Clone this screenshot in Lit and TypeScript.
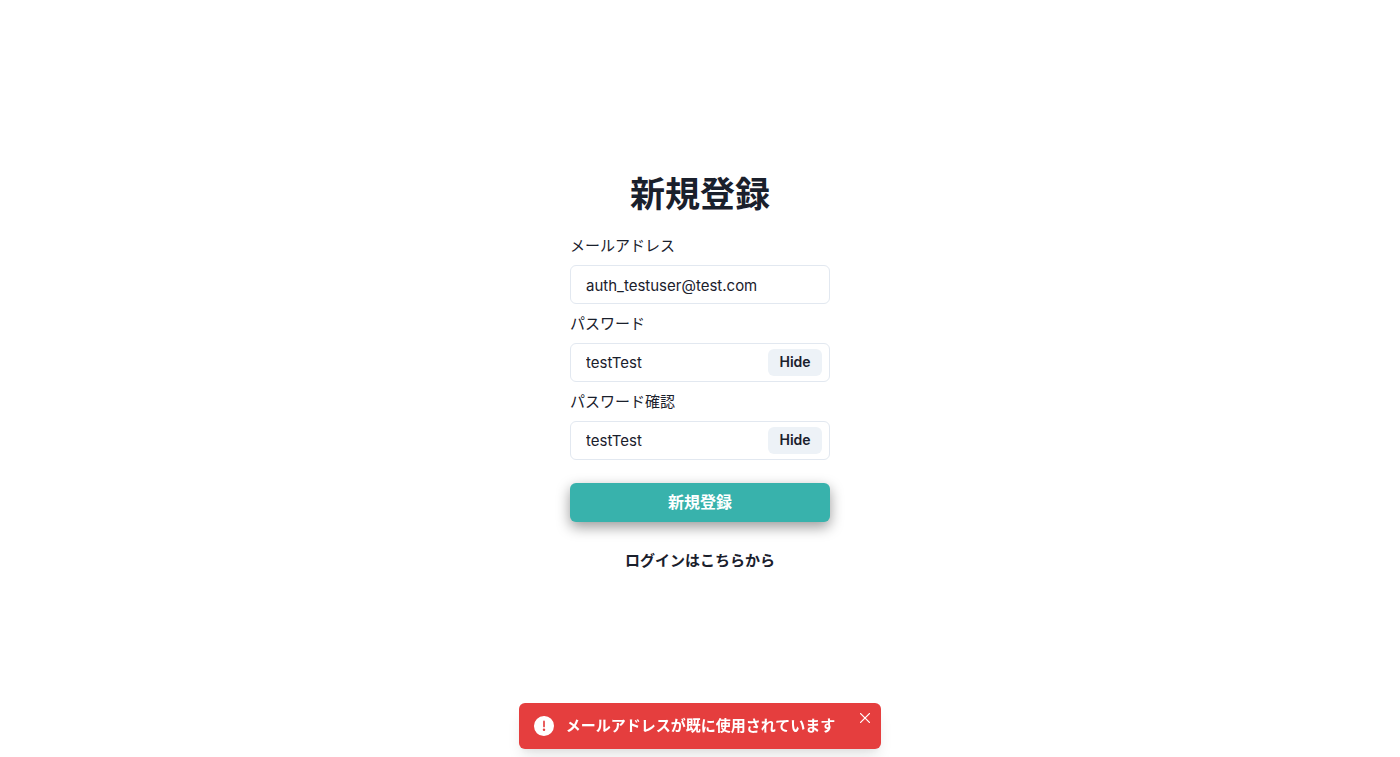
import { LitElement, html, css } from "lit";
import { customElement, property, state } from "lit/decorators.js";

@customElement("password-field")
class PasswordField extends LitElement {
  @property() label = "";
  @property() value = "";
  @state() private visible = true;

  static styles = css`
    :host {
      display: block;
    }
    .label {
      display: block;
      margin-bottom: 6px;
      line-height: 26px;
      font-weight: 400;
    }
    .group {
      display: flex;
      align-items: center;
      box-sizing: border-box;
      height: 39px;
      padding: 0 7px 0 15px;
      border: 1px solid #e2e8f0;
      border-radius: 6px;
    }
    .group:focus-within {
      border-color: #3182ce;
    }
    .input {
      flex: 1;
      min-width: 0;
      padding: 2px 0 0;
      border: 0;
      outline: 0;
      background: none;
      color: inherit;
      font: inherit;
    }
    .toggle {
      width: 54px;
      height: 27px;
      padding: 0;
      border: 0;
      border-radius: 6px;
      background: #edf2f7;
      color: inherit;
      font: inherit;
      font-size: 14px;
      font-weight: 600;
      cursor: pointer;
    }
  `;

  render() {
    return html`
      <label class="label" for="field">${this.label}</label>
      <div class="group">
        <input
          class="input"
          id="field"
          type=${this.visible ? "text" : "password"}
          .value=${this.value}
        />
        <button class="toggle" type="button" @click=${() => (this.visible = !this.visible)}>
          ${this.visible ? "Hide" : "Show"}
        </button>
      </div>
    `;
  }
}

@customElement("app-root")
class AppRoot extends LitElement {
  @state() private toastOpen = true;

  static styles = css`
    :host {
      display: block;
      color: #1a202c;
      background: #fff;
      font-family: Inter, "Noto Sans CJK JP", sans-serif;
      font-size: 15px;
      line-height: 24px;
    }
    .page {
      display: flex;
      align-items: center;
      justify-content: center;
      box-sizing: border-box;
      min-height: 100vh;
      padding: 16px 16px 28px;
    }
    .form {
      display: flex;
      flex-direction: column;
      width: 100%;
      max-width: 260px;
    }
    .title {
      margin: 0 0 18px;
      font-size: 35px;
      line-height: 42px;
      font-weight: 700;
      text-align: center;
    }
    .fields {
      display: flex;
      flex-direction: column;
      gap: 7px;
    }
    .label {
      display: block;
      margin-bottom: 6px;
      line-height: 26px;
      font-weight: 400;
    }
    .input {
      display: block;
      box-sizing: border-box;
      width: 100%;
      height: 39px;
      padding: 2px 15px 0;
      border: 1px solid #e2e8f0;
      border-radius: 6px;
      outline: 0;
      background: none;
      color: inherit;
      font: inherit;
    }
    .input:focus {
      border-color: #3182ce;
    }
    .submit {
      height: 39px;
      margin: 23px 0 27px;
      padding: 0;
      border: 0;
      border-radius: 6px;
      background: #38b2ac;
      box-shadow: 0 5px 14px rgba(0, 0, 0, 0.4);
      color: #fff;
      font: inherit;
      font-size: 16px;
      font-weight: 600;
      cursor: pointer;
    }
    .login {
      align-self: center;
      color: inherit;
      font-weight: 600;
      text-decoration: none;
    }
    .toast-area {
      position: fixed;
      right: 0;
      bottom: 8px;
      left: 0;
      display: flex;
      justify-content: center;
      pointer-events: none;
    }
    .toast {
      display: flex;
      align-items: flex-start;
      padding: 11px 8px 11px 15px;
      border-radius: 6px;
      background: #e53e3e;
      box-shadow: 0 10px 15px -3px rgba(0, 0, 0, 0.1), 0 4px 6px -2px rgba(0, 0, 0, 0.05);
      color: #fff;
      font-weight: 600;
      pointer-events: auto;
    }
    .alert-icon {
      flex: none;
      width: 20px;
      height: 24px;
      margin-right: 12px;
    }
    .close {
      display: flex;
      align-items: center;
      justify-content: center;
      width: 16px;
      height: 16px;
      margin: -4px 0 0 22px;
      padding: 0;
      border: 0;
      background: none;
      color: inherit;
      cursor: pointer;
    }
  `;

  render() {
    return html`
      <main class="page">
        <form class="form" @submit=${(e: Event) => e.preventDefault()}>
          <h1 class="title">新規登録</h1>
          <div class="fields">
            <div>
              <label class="label" for="email">メールアドレス</label>
              <input class="input" id="email" type="email" value="auth_testuser@test.com" />
            </div>
            <password-field label="パスワード" value="testTest"></password-field>
            <password-field label="パスワード確認" value="testTest"></password-field>
          </div>
          <button class="submit" type="submit">新規登録</button>
          <a class="login" href="#login">ログインはこちらから</a>
        </form>
      </main>
      ${this.toastOpen
        ? html`
            <div class="toast-area">
              <div class="toast" role="alert">
                <svg class="alert-icon" viewBox="0 0 24 24" aria-hidden="true">
                  <path
                    fill="currentColor"
                    d="M11.983,0a12.206,12.206,0,0,0-8.51,3.653A11.8,11.8,0,0,0,0,12.207,11.779,11.779,0,0,0,11.8,24h.214A12.111,12.111,0,0,0,24,11.791h0A11.766,11.766,0,0,0,11.983,0ZM10.5,16.542a1.476,1.476,0,0,1,1.449-1.53h.027a1.527,1.527,0,0,1,1.523,1.47,1.475,1.475,0,0,1-1.449,1.53h-.027A1.529,1.529,0,0,1,10.5,16.542ZM11,12.5v-6a1,1,0,0,1,2,0v6a1,1,0,1,1-2,0Z"
                  />
                </svg>
                <span>メールアドレスが既に使用されています</span>
                <button
                  class="close"
                  type="button"
                  aria-label="閉じる"
                  @click=${() => (this.toastOpen = false)}
                >
                  <svg width="10" height="10" viewBox="0 0 10 10" aria-hidden="true">
                    <path
                      d="M0.6 0.6L9.4 9.4M9.4 0.6L0.6 9.4"
                      stroke="currentColor"
                      stroke-width="1.3"
                      stroke-linecap="round"
                    />
                  </svg>
                </button>
              </div>
            </div>
          `
        : ""}
    `;
  }
}
